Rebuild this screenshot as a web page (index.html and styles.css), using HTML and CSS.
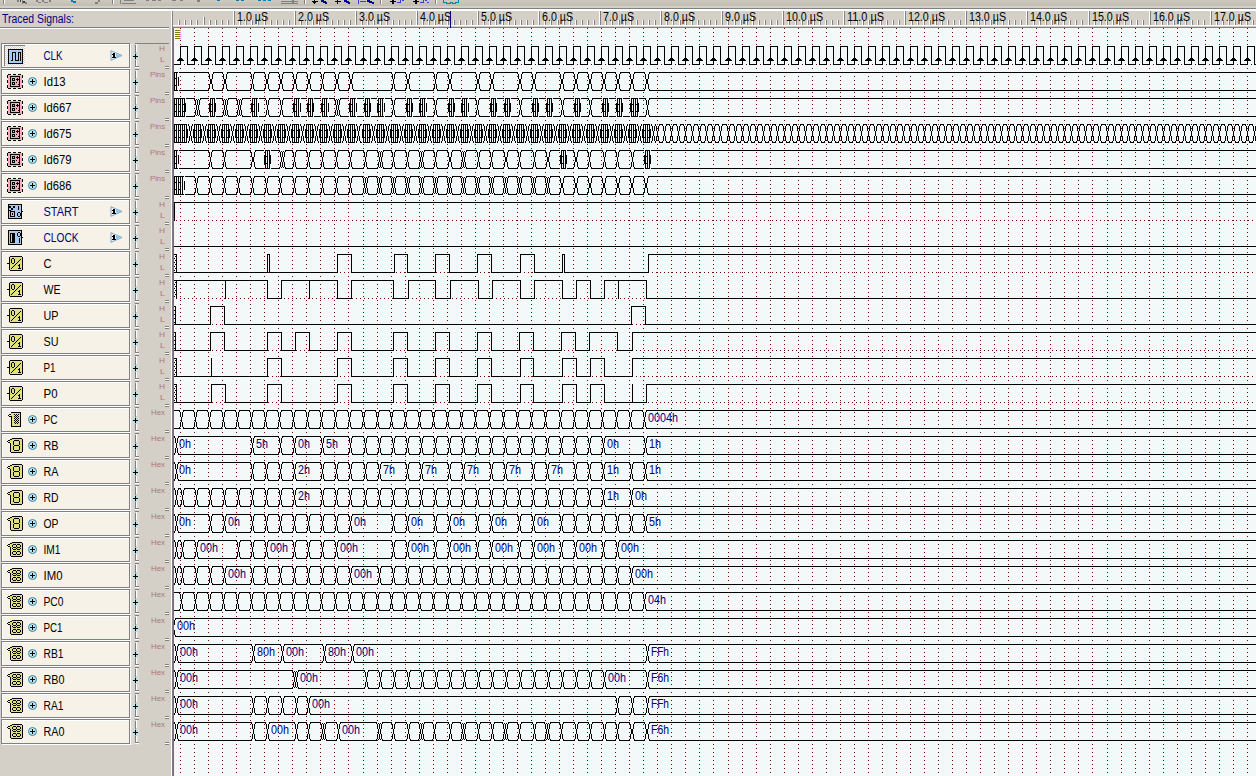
FILE: index.html
```html
<!DOCTYPE html>
<html lang="en">
<head>
<meta charset="utf-8">
<title>Traced Signals</title>
<link rel="stylesheet" href="styles.css">
</head>
<body>
<div class="app">
  <header class="toolbar">
    <svg class="toolbar-icons" width="480" height="6" viewBox="0 0 480 6" shape-rendering="crispEdges">
      <path fill="#fff" d="M4 0h1v4h-1zM113 0h1v4h-1zM305 0h1v4h-1zM381 0h1v4h-1zM436 0h1v4h-1z"/>
      <path fill="#808080" d="M3 0h1v4h-1zM112 0h1v4h-1zM304 0h1v4h-1zM380 0h1v4h-1zM435 0h1v4h-1zM17 0h2v2h-2zM22 0h1v4h-1zM25 2h2v2h-2zM36 0h2v2h-2zM38 2h3v1h-3zM42 0h2v2h-2zM44 2h4v1h-4zM49 0h2v2h-2zM95 2h3v2h-3zM98 0h2v2h-2zM120 0h1v4h-1zM122 3h14v1h-14zM124 0h10v1h-10zM146 0h3v1h-3zM152 0h4v1h-4zM158 0h3v1h-3zM172 0h4v1h-4zM180 0h3v1h-3zM197 0h3v2h-3zM281 1h17v1h-17zM281 3h17v1h-17zM292 0h2v4h-2z"/>
      <path fill="#404040" d="M20 0h1v2h-1zM23 1h2v2h-2z"/>
      <path fill="#0080b0" d="M71 0h2v2h-2zM73 1h3v2h-3zM217 0h3v1h-3zM236 0h3v1h-3zM241 0h3v1h-3zM258 0h3v1h-3zM263 0h3v1h-3zM268 0h3v1h-3zM443 0h1v3h-1zM443 2h4v1h-4zM446 3h5v1h-5zM450 2h3v1h-3zM452 3h4v1h-4zM455 2h4v1h-4zM458 0h1v3h-1z"/>
      <path fill="#000" d="M314 0h1v4h-1zM312 1h6v1h-6zM313 2h3v1h-3zM337 0h1v4h-1zM335 1h6v1h-6zM392 0h2v4h-2zM390 1h6v1h-6zM415 0h2v4h-2zM413 1h6v1h-6z"/>
      <path fill="#000090" d="M321 0h3v2h-3zM323 1h3v2h-3zM325 2h2v2h-2zM344 0h3v2h-3zM346 1h3v2h-3zM348 2h2v2h-2zM367 0h3v2h-3zM369 1h3v2h-3zM372 2h2v2h-2z"/>
      <path fill="#3040d8" d="M358 0h1v4h-1zM360 1h6v1h-6zM397 2h4v1h-4zM400 0h1v2h-1zM402 0h2v1h-2zM420 2h4v1h-4zM423 0h1v2h-1zM425 0h2v1h-2zM427 2h2v1h-2z"/>
    </svg>
  </header>
  <main class="trace">
    <section class="side">
      <h1 class="side-title"><svg width="100" height="16"><text class="title-text" x="2" y="12" textLength="72" lengthAdjust="spacingAndGlyphs">Traced Signals:</text></svg></h1>
      <div class="signals" id="signals"></div>
    </section>
    <section class="view">
      <svg class="ruler" id="ruler" width="1083" height="17" viewBox="173 11 1083 17"></svg>
      <svg class="waves" id="waves" width="1083" height="748" viewBox="173 28 1083 748" shape-rendering="crispEdges"></svg>
    </section>
  </main>
</div>
<script src="trace.js"></script>
</body>
</html>
```

FILE: styles.css
```css
* { box-sizing: border-box; }
body {
  margin: 0;
  background: #d4d0c8;
  font-family: "Liberation Sans", Arial, sans-serif;
  overflow: hidden;
}
svg { display: block; }
text { font-family: "Liberation Sans", Arial, sans-serif; }
.app { display: flex; flex-direction: column; width: 1256px; height: 776px; }
.toolbar {
  height: 11px;
  flex: none;
  background: linear-gradient(#cdc9bf, #c1bdb1 6px, #d4d0c8 6px, #d4d0c8 8px, #808080 8px, #808080 9px, #fff 9px);
}
.trace { display: flex; flex: 1; min-height: 0; }
.side { width: 173px; flex: none; border-right: 1px solid #808080; box-shadow: inset -1px 0 #fff; }
.side-title {
  margin: 0 3px 0 0;
  height: 17px;
  width: 169px;
  border-bottom: 1px solid #808080;
  box-shadow: 0 1px #fff;
}
.side-title svg { overflow: visible; }
.title-text { font-size: 12px; font-weight: 400; fill: #000080; }
.signals { padding-top: 15px; width: 171px; }
.signal { display: flex; height: 26px; }
.cell {
  display: flex;
  align-items: center;
  width: 129px;
  height: 25px;
  margin-left: 1px;
  border: 1px solid #808080;
  background: #f6f2e8;
  box-shadow: inset 1px 1px #fff, 1px 1px #fff;
}
.icon { width: 16px; height: 17px; margin-left: 4px; flex: none; }
.icon-wrap { display: flex; align-items: center; height: 21px; width: 24px; margin-left: 1px; flex: none; }
.selected .icon-wrap {
  background: repeating-conic-gradient(#d4d0c8 0 25%, #fff 0 50%) 0 0 / 2px 2px;
  width: 21px;
  margin: 0 2px 0 2px;
  border-top: 1px solid #808080;
  border-left: 1px solid #808080;
}
.selected .icon { margin-left: 2px; }
.expand { width: 11px; margin-left: 0; flex: none; }
.name { width: 62px; flex: none; margin-left: 5px; }
.name text { font-size: 12px; fill: #000; }
.name .input { fill: #000080; }
.arrow { margin-left: 5px; flex: none; }
.tree { flex: none; margin-left: 1px; }
.level { font-size: 8px; fill: #b07474; }
.view { display: flex; flex-direction: column; }
.ruler { background: #d4d0c8; flex: none; }
.ruler text { font-size: 12px; fill: #000; }
.waves { background: #f3f9f9; }
.waves text { font-size: 12px; fill: #000080; }
```

FILE: trace.js
```javascript
const ROW = 26;
const TOP = 46;
const END = 1256;

const rect = (x, y, w, h) => `M${x} ${y}h${w}v${h}h${-w}z`;
const gridX = i => 180 + 14 * i + (i > 12) + (i > 38) + (i > 65);
const edge = j => 182 + 14 * j + (j > 12);
const range = (a, b) => Array.from({ length: b - a + 1 }, (_, i) => a + i);
const edges = (...list) => list.flatMap(j => Array.isArray(j) ? range(j[0], j[1]) : [j]).map(edge);

const slash = range(0, 9).map(k => rect(4 + k, 13 - k, 1, 1)).join('');
const ring = (x, y, w, h) => rect(x + 1, y, w - 2, 1) + rect(x + 1, y + h - 1, w - 2, 1) + rect(x, y + 1, 1, h - 2) + rect(x + w - 1, y + 1, 1, h - 2);
const tag = digits => '<path fill="#e0e080" d="M4 1h11v15H4zM2 3h2v3H2z"/><path d="' +
  rect(5, 1, 10, 1) + rect(15, 2, 1, 13) + rect(4, 15, 11, 1) + rect(3, 6, 1, 9) + rect(3, 2, 2, 1) + rect(1, 3, 2, 1) + rect(0, 4, 1, 1) + rect(1, 5, 2, 1) + digits + '"/>';

const ICONS = {
  clk: '<path fill="#a6caf0" d="M1 1h14v15H1z"/><path fill="none" stroke="#000" d="M1.500 1.500h14v14h-14zM3.500 12.500h2v-8h3v8h3v-8h2v8"/>',
  pins: '<path fill="#ffa8c0" d="M1 2h14v13H1z"/><path fill="none" stroke="#000" d="M3.500 3.500h9v10h-9z"/><path fill="none" stroke="#000" stroke-dasharray="3 2" d="M1 1.500h14M1 15.500h14M.500 2v13M15.500 2v13"/><path fill="none" stroke="#000" d="M5.500 5.500h2v2h-2zM5.500 9.500h2v2h-2z"/><path d="M9 6h3v1H9zM10 5h1v3h-1zM9 9h1v1H9zM11 11h1v1h-1z"/>',
  start: '<path fill="#a6caf0" d="M1 1h14v15H1z"/><path fill="none" stroke="#000" d="M1.500 1.500h13v14h-13zM15 8.500h1M11.500 3v4"/><path d="M2 3h2v2H2zM4 5h2v2H4zM6 3h2v2H6zM2 7h2v1H2zM3 8h1v6H3zM4 8h4v1H4zM7 9h1v5H7zM4 13h3v1H4zM5 10h1v2H5z' + ring(10, 9, 4, 5) + '"/>',
  clock: '<path fill="#a6caf0" d="M1 1h14v15H1z"/><path fill="none" stroke="#000" d="M1.500 1.500h13v14h-13zM15 8.500h1M12.500 9v5"/><path d="M3 4h5v10H3z' + ring(10, 3, 4, 5) + '"/><path fill="#a6caf0" d="M4 5h1v8H4z"/>',
  bit: '<path fill="#e0e080" d="M2 1h13v15H2z"/><path d="' + slash + ring(4, 3, 4, 6) + rect(12, 9, 1, 5) + rect(11, 10, 1, 1) + rect(11, 13, 3, 1) + ring(2, 1, 14, 15) + rect(0, 8, 2, 1) + '"/>',
  mem: '<path fill="#e0e080" d="M4 1h9v15H4z"/><path d="' + rect(4, 1, 10, 1) + rect(13, 2, 1, 14) + rect(4, 15, 9, 1) + rect(4, 6, 1, 9) + rect(2, 3, 2, 1) + rect(1, 4, 1, 1) + rect(2, 5, 3, 1) + range(0, 4).map(k => rect(7, 3 + 2 * k, 1, 1) + rect(9, 3 + 2 * k, 1, 1) + rect(11, 3 + 2 * k, 1, 1) + rect(8, 4 + 2 * k, 1, 1) + rect(10, 4 + 2 * k, 1, 1)).join('') + '"/>',
  hex1: tag(ring(6, 3, 7, 6) + ring(6, 8, 7, 6)),
  hex2: tag(ring(5, 3, 5, 4) + ring(9, 3, 5, 4) + ring(5, 6, 5, 3) + ring(9, 6, 5, 3) + ring(5, 10, 5, 4) + ring(9, 10, 5, 4))
};

/* level signals: start level, width of the initial burst, level changes, glitches */
/* bus signals: value changes, dense bursts, labels at [x, text] */
const SIGNALS = [
  { name: 'CLK', w: 19, icon: 'clk', tag: 'HL', input: true, clock: true },
  { name: 'Id13', w: 22, icon: 'pins', tag: 'Pins',
    bus: [[210, 211], [224, 225], 252, [266, 267], [280, 281], [294, 295], [308, 309], 322, [336, 337], [350, 351], 393, [407, 408], 435, [449, 450], [477, 478], [491, 492], [519, 520], [533, 534], [561, 562], [575, 576], [589, 590], [603, 604], [617, 618], [631, 632], [646, 647]].flat(),
    dense: [[174, 177]] },
  { name: 'Id667', w: 28, icon: 'pins', tag: 'Pins',
    bus: [196, 198, 224, 226, 238, 240, 267, 281, 336, 338, 393, 435, 477, 520, 562, 590, 647],
    dense: [[174, 184], [210, 214], [252, 257], [294, 299], [308, 312], [322, 327], [350, 355], [365, 369], [378, 383], [407, 411], [420, 425], [449, 453], [462, 467], [491, 495], [505, 509], [533, 537], [547, 551], [575, 579], [603, 607], [617, 621], [631, 637]] },
  { name: 'Id675', w: 28, icon: 'pins', tag: 'Pins', mixed: true },
  { name: 'Id679', w: 28, icon: 'pins', tag: 'Pins',
    bus: [210, 224, 252, 253, 281, 283, 294, 308, 322, 336, 350, 365, 379, 381, 393, 407, 420, 422, 435, 449, 450, 462, 464, 478, 491, 505, 506, 519, 534, 547, 548, 575, 576, 589, 604, 617, 632],
    dense: [[174, 177], [265, 269], [561, 565], [645, 649]] },
  { name: 'Id686', w: 28, icon: 'pins', tag: 'Pins',
    bus: [...range(1, 12).map(edge), ...range(13, 26).flatMap(j => [edge(j) - 1, edge(j) + 1]), ...range(27, 33).flatMap(j => [edge(j), edge(j) + 1])],
    dense: [[174, 183]] },
  { name: 'START', w: 35, icon: 'start', tag: 'HL', input: true, level: 0, changes: [174] },
  { name: 'CLOCK', w: 35, icon: 'clock', tag: 'HL', input: true, level: 0, changes: [] },
  { name: 'C', w: 8, icon: 'bit', tag: 'HL', level: 0, burst: 3, changes: [267, 269, 337, 351, 394, 407, 435, 449, 477, 491, 520, 534, 562, 564, 648] },
  { name: 'WE', w: 17, icon: 'bit', tag: 'HL', level: 1, burst: 3, changes: [267, 281, 337, 351, 393, 408, 435, 450, 478, 492, 520, 534, 562, 576, 590, 604, 646], glitch: [225, 309, 618] },
  { name: 'UP', w: 15, icon: 'bit', tag: 'HL', level: 0, burst: 2, changes: [210, 224, 631, 645] },
  { name: 'SU', w: 15, icon: 'bit', tag: 'HL', level: 0, burst: 2, changes: [210, 224, 267, 281, 295, 309, 337, 351, 393, 407, 435, 449, 477, 491, 519, 533, 561, 575, 589, 617, 632] },
  { name: 'P1', w: 12, icon: 'bit', tag: 'HL', level: 0, burst: 3, changes: [267, 281, 337, 351, 393, 407, 435, 449, 477, 491, 520, 533, 562, 576, 590, 604, 632], glitch: [211] },
  { name: 'P0', w: 14, icon: 'bit', tag: 'HL', level: 0, burst: 3, changes: [211, 225, 267, 281, 337, 351, 393, 407, 435, 449, 477, 491, 520, 533, 562, 576, 590, 604, 646], glitch: [632] },
  { name: 'PC', w: 14, icon: 'mem', tag: 'Hex', bus: range(0, 33).map(i => 181 + 14 * i + (i > 26)), labels: [[648, '0004h']] },
  { name: 'RB', w: 15, icon: 'hex1', tag: 'Hex', bus: [176, ...edges(5, 7, 8, 10, [12, 30], 33)],
    labels: [[179, '0h'], [256, '5h'], [298, '0h'], [326, '5h'], [607, '0h'], [649, '1h']] },
  { name: 'RA', w: 15, icon: 'hex1', tag: 'Hex', bus: [176, ...edges([5, 8], [10, 14], 16, 17, 19, 20, 22, 23, 25, 26, 28, 29, 30, 32, 33)],
    labels: [[179, '0h'], [298, '2h'], [383, '7h'], [425, '7h'], [467, '7h'], [509, '7h'], [551, '7h'], [607, '1h'], [649, '1h']] },
  { name: 'RD', w: 15, icon: 'hex1', tag: 'Hex', bus: [176, ...edges([0, 8], [10, 30], 32)],
    labels: [[298, '2h'], [607, '1h'], [635, '0h']] },
  { name: 'OP', w: 15, icon: 'hex1', tag: 'Hex', bus: [176, ...edges(2, 3, [5, 12], 15, 16, 18, 19, 21, 22, 24, 25, [27, 33])],
    labels: [[179, '0h'], [228, '0h'], [354, '0h'], [411, '0h'], [453, '0h'], [495, '0h'], [537, '0h'], [649, '5h']] },
  { name: 'IM1', w: 17, icon: 'hex2', tag: 'Hex', bus: [176, ...edges(0, 1, 4, 5, 6, [8, 11], 15, 16, 18, 19, 21, 22, 24, 25, 27, 28, 30, 31)],
    labels: [[200, '00h'], [270, '00h'], [340, '00h'], [411, '00h'], [453, '00h'], [495, '00h'], [537, '00h'], [579, '00h'], [621, '00h']] },
  { name: 'IM0', w: 19, icon: 'hex2', tag: 'Hex', bus: [176, ...edges([0, 3], [5, 12], [14, 32])],
    labels: [[228, '00h'], [354, '00h'], [635, '00h']] },
  { name: 'PC0', w: 20, icon: 'hex2', tag: 'Hex', bus: range(0, 33).map(i => 181 + 14 * i + (i > 26)), labels: [[648, '04h']] },
  { name: 'PC1', w: 19, icon: 'hex2', tag: 'Hex', bus: [173], labels: [[177, '00h']] },
  { name: 'RB1', w: 20, icon: 'hex2', tag: 'Hex', bus: [176, 253, 282, 324, 352, 647],
    labels: [[180, '00h'], [257, '80h'], [286, '00h'], [328, '80h'], [356, '00h'], [651, 'FFh']] },
  { name: 'RB0', w: 21, icon: 'hex2', tag: 'Hex', bus: [176, 294, 296, ...range(13, 30).map(j => edge(j) + 1), 647],
    labels: [[180, '00h'], [300, '00h'], [608, '00h'], [651, 'F6h']] },
  { name: 'RA1', w: 20, icon: 'hex2', tag: 'Hex', bus: [176, 253, 267, 282, 296, 308, 617, 632, 647],
    labels: [[180, '00h'], [312, '00h'], [651, 'FFh']] },
  { name: 'RA0', w: 21, icon: 'hex2', tag: 'Hex', bus: [176, 253, 267, 296, 308, 322, 324, 338, 378, 380, 393, 408, 420, 422, 434, 450, 462, 464, 478, 492, 504, 506, 519, 534, 546, 548, 561, 576, 590, 604, 617, 631, 632, 646, 647],
    labels: [[180, '00h'], [271, '00h'], [342, '00h'], [651, 'F6h']] }
];

const text = (x, y, value, width, cls = '') =>
  `<text ${cls ? `class="${cls}" ` : ''}x="${x}" y="${y}" textLength="${width}" lengthAdjust="spacingAndGlyphs">${value}</text>`;

/* signal list */
function signalRow(s, i) {
  const expand = s.tag === 'HL' ? '' :
    '<svg width="11" height="11" viewBox="0 0 11 11"><circle cx="5.500" cy="5.500" r="4" fill="#b8e4ee" stroke="#3888a8"/><path stroke="#000" stroke-width="1" d="M5.500 3v5M3 5.500h5"/></svg>';
  const arrow = s.input ?
    '<svg class="arrow" width="13" height="11" viewBox="0 0 13 11"><path fill="#e8f4fc" stroke="#6890c0" stroke-width=".8" d="M1 .700 12 5.500 1 10.300z"/><path fill="#90c8e8" d="M6 3l5 2.500L6 8z"/><path fill="#000" d="M3 3h2v5H3zM2 4h1v1H2zM2 7h4v1H2z"/></svg>' : '';
  const level = s.tag === 'HL'
    ? text(28, 8, 'H', 6, 'level') + text(29, 19, 'L', 5, 'level')
    : text(s.tag === 'Pins' ? 19 : 20, 8, s.tag, s.tag === 'Pins' ? 15 : 14, 'level');
  const tree = `<svg class="tree" width="40" height="26" viewBox="0 0 40 26">
    <path fill="#dcd9d2" d="M0 0h3v26H0zM6 0h2v26H6z"/>
    <path fill="#808080" d="M4 2h1v22H4zM4 0h4v1H4zM4 23h4v1H4zM34 23h4v1h-4zM34 25h4v1h-4z${i ? '' : 'M4 0h34v1H4z'}"/>
    <path fill="#fff" d="M5 1h1v8H5zM5 17h1v6H5zM4 24h4v1H4zM34 24h4v1h-4z"/>
    <circle cx="4.500" cy="13.500" r="3" fill="#b8e4ec"/><path fill="#000" d="M4 11h1v5H4zM2 13h5v1H2z"/>${level}</svg>`;
  return `<div class="signal${i ? '' : ' selected'}"><div class="cell"><div class="icon-wrap"><svg class="icon" viewBox="0 0 16 17" shape-rendering="crispEdges">${ICONS[s.icon]}</svg></div>` +
    `<div class="expand">${expand}</div><svg class="name" width="62" height="15">${text(0.5, 12, s.name, s.w, s.input ? 'input' : '')}</svg>${arrow}</div>${tree}</div>`;
}

/* one crossing of the two bus rails; w widens its waist */
function cross(x, y, w = 0) {
  let d = rect(x, y + 7, 1 + w, 5);
  for (const [px, k] of [[x, -1], [x + w, 1]]) {
    d += rect(px + 2 * k, y + 1, 1, 1) + rect(px + k, y + 2, 1, 5);
    d += rect(px + k, y + 12, 1, 5) + rect(px + 2 * k, y + 17, 1, 1);
  }
  return d;
}

function rails(a, b, y) {
  return b > a ? rect(a, y, b - a, 1) + rect(a, y + 18, b - a, 1) : '';
}

function bus(list, dense, y, end = END) {
  let d = '';
  const singles = [];
  for (const x of list) {
    const last = singles[singles.length - 1];
    if (last && last[0] + 1 === x && !last[2]) last[2] = 1;
    else singles.push([x, x, 0]);
  }
  const marks = [...singles, ...dense].sort((p, q) => p[0] - q[0]);
  let from = 174;
  for (const [a, b, w] of marks) {
    if (a - 1 > from) d += rails(from, a - 1, y);
    if (a === b) {
      d += cross(a, y, w);
      from = a + w + 2;
    } else {
      d += rails(a, b + 1, y);
      for (let x = a; x <= b; x += 2) d += rect(x, y, 1, 19);
      for (let x = a + 1; x < b; x += 4) d += rect(x, y + 6, 1, 1) + rect(x, y + 13, 1, 1);
      d += rect(a - 1, y + 5, 1, 9) + rect(b + 1, y + 5, 1, 9);
      from = b + 2;
    }
  }
  return d + rails(from, end, y);
}

function level(s, y) {
  let d = '', dots = '', on = s.level, x = 174;
  const seg = (to) => {
    d += rect(x, on ? y : y + 18, to - x, 1);
    if (on) for (let p = Math.ceil(x / 4) * 4; p < to; p += 4) dots += rect(p, y + 18, 1, 1);
  };
  if (s.burst) {
    d += rect(174, y, s.burst, 1) + rect(173 + s.burst, y, 1, 19);
    for (let k = 2; k < 18; k += 2) d += rect(174 + (k / 2) % 2, y + k, 1, 1);
  }
  for (const c of s.changes) {
    seg(c);
    d += rect(c, y, 1, 19);
    on = !on;
    x = c;
  }
  seg(END);
  for (const g of s.glitch || []) d += rect(g, y, 1, 19);
  return [d, dots];
}

function drawWaves() {
  let ink = '', dots = '', labels = '';
  for (let i = 0; gridX(i) < END; i++)
    for (let y = 28; y < 776; y += 4) dots += rect(gridX(i), y, 1, 1);
  SIGNALS.forEach((s, i) => {
    const y = TOP + ROW * i;
    if (s.clock) {
      ink += rect(174, y + 18, 6, 1);
      for (let k = 0; gridX(k) < END; k++) {
        const g = gridX(k);
        ink += rect(g, y, 1, 19) + rect(g, y, 8, 1) + rect(g + 7, y, 1, 19) + rect(g + 7, y + 18, gridX(k + 1) - g - 7, 1);
        ink += rect(g - 1, y + 12, 3, 1) + rect(g - 2, y + 13, 5, 1) + rect(g - 3, y + 14, 7, 1);
        dots += rect(g + 4, y + 18, 1, 1);
      }
    } else if (s.mixed) {
      const list = [190], dense = [[174, 186]];
      for (let k = 1; gridX(k) < END; k++) {
        const g = gridX(k);
        if (g < 646) { dense.push([g, g + 6]); list.push(g + 10); }
        else list.push(g, g + 7);
      }
      ink += bus(list, dense, y);
    } else if (s.bus) {
      ink += bus(s.bus, s.dense || [], y);
    } else {
      const [a, b] = level(s, y);
      ink += a;
      dots += b;
    }
    for (const [x, v] of s.labels || []) labels += text(x, y + 12, v, v.length * 6);
  });
  let cursor = '', tips = '';
  for (let y = 30; y < 40; y += 2) { cursor += rect(175, y, 6, 1); tips += rect(180, y, 1, 1); }
  document.getElementById('waves').innerHTML =
    `<path fill="#800000" d="${dots}"/><path d="${ink}"/><path fill="#808000" d="${rect(173, 28, 1, 748)}${cursor}"/><path fill="#ff80ff" d="${tips}"/>${labels}`;
}

function drawRuler() {
  let dark = '', light = '', labels = '';
  for (let n = 1; n < 178; n++) {
    const x = Math.round(173 + 6.1035 * n);
    const y = n % 10 === 0 ? 11 : n % 10 === 5 ? 17 : 20;
    dark += rect(x, y, 1, 25 - y);
    light += rect(x - 1, y, 1, 25 - y);
    if (n % 10 === 0) labels += text(x + 3, 21, `${n / 10}.0 µS`, n < 100 ? 31 : 37);
  }
  document.getElementById('ruler').innerHTML =
    `<g shape-rendering="crispEdges"><path fill="#fff" d="${light}M173 25h1083v1H173z"/><path fill="#808080" d="${dark}M173 27h1083v1H173z"/></g>${labels}<path fill="#000080" d="M450 11h1v17h-1z"/>`;
}

document.getElementById('signals').innerHTML = SIGNALS.map(signalRow).join('');
drawRuler();
drawWaves();
```
